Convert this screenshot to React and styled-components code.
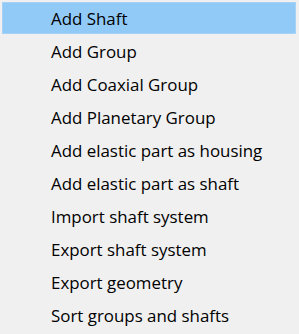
import React from "react";
import styled, { createGlobalStyle } from "styled-components";

const Global = createGlobalStyle`
  html, body { margin: 0; padding: 0; background: #f0f0f0; }
  body { font-family: "Open Sans", "Noto Sans", sans-serif; }
`;

const Menu = styled.div`
  width: 299px;
  height: 334px;
  box-sizing: border-box;
  padding: 2px 3px 0 2px;
  background: #f0f0f0;
  display: flex;
  flex-direction: column;
  gap: 1px;
`;

const Item = styled.div`
  height: 32px;
  box-sizing: border-box;
  padding-left: 48px;
  display: flex;
  align-items: center;
  font-size: 16.9px;
  color: #000;
  white-space: nowrap;
  background: ${(p) => (p.$active ? "#91c9f7" : "transparent")};
  border: 1px solid ${(p) => (p.$active ? "#a6d2f8" : "transparent")};
`;

const items = [
  "Add Shaft",
  "Add Group",
  "Add Coaxial Group",
  "Add Planetary Group",
  "Add elastic part as housing",
  "Add elastic part as shaft",
  "Import shaft system",
  "Export shaft system",
  "Export geometry",
  "Sort groups and shafts",
];

export default function App() {
  return (
    <>
      <Global />
      <Menu>
        {items.map((t, i) => (
          <Item key={t} $active={i === 0}>
            {t}
          </Item>
        ))}
      </Menu>
    </>
  );
}
